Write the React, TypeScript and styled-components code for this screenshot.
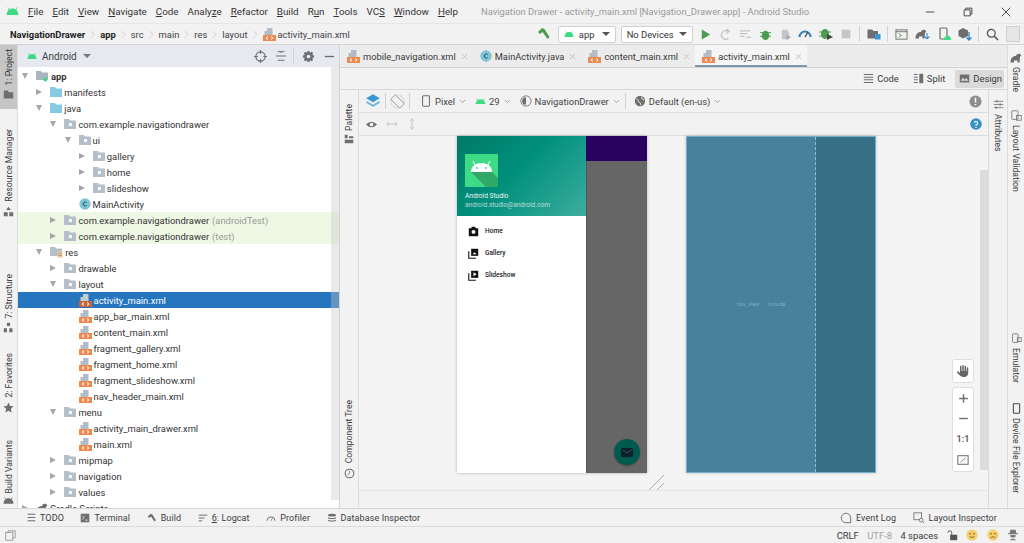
import * as React from 'react'
import styled, { createGlobalStyle } from 'styled-components'
import { LuChevronRight, LuChevronDown, LuX } from 'react-icons/lu'
import { FaHand } from 'react-icons/fa6'

const GlobalStyle = createGlobalStyle`
  html, body { margin: 0; padding: 0; width: 1024px; height: 543px; overflow: hidden; }
  body { font-family: Roboto, "Noto Sans", "Liberation Sans", sans-serif; color: #3a3a3a; background: #f2f2f2; }
  * { box-sizing: border-box; }
  svg { flex-shrink: 0; }
`

const Window = styled.div`
  width: 1024px;
  height: 543px;
  display: flex;
  flex-direction: column;
  overflow: hidden;
  font-size: 9.4px;
`

/* ---------- icons ---------- */

const Droid: React.FC<{ w?: number; color?: string }> = ({ w = 12, color = '#3ddc84' }) => (
  <svg width={w} height={w * 0.62} viewBox="0 0 20 12">
    <path d="M1 12 C1 6 5 2 10 2 C15 2 19 6 19 12 Z" fill={color} />
    <path d="M5 4 L3 0.5 M15 4 L17 0.5" stroke={color} strokeWidth="1.4" />
  </svg>
)

const XmlIcon: React.FC<{ dim?: boolean }> = ({ dim }) => (
  <svg width="13" height="13" viewBox="0 0 13 13">
    <path d="M4 0 H9.5 V7 H4 Z M1.5 3 H4 V7 H1.5 Z" fill={dim ? '#c5ccd4' : '#b3bcc4'} />
    <rect x="0" y="7" width="13" height="6" fill={dim ? '#c8683a' : '#ee8a4f'} />
    <path d="M5 8.5 L3 10 L5 11.5 M8 8.5 L10 10 L8 11.5" stroke="#fff" strokeWidth="1" fill="none" />
  </svg>
)

const ClassIcon = () => (
  <svg width="12" height="12" viewBox="0 0 12 12">
    <circle cx="6" cy="6" r="5.7" fill="#7fc5d8" />
    <path d="M7.6 4.6 A2 2 0 1 0 7.6 7.4" stroke="#2c4a58" strokeWidth="1" fill="none" />
  </svg>
)

const PackageIcon = () => (
  <svg width="12" height="10" viewBox="0 0 12 10">
    <path d="M0 0 H5 L6 1.5 H12 V10 H0 Z" fill="#b4bfc9" />
    <rect x="5" y="4" width="3" height="3" fill="#fff" />
  </svg>
)

const BlueFolder = () => (
  <svg width="12" height="10" viewBox="0 0 12 10">
    <path d="M0 0 H5 L6 1.5 H12 V10 H0 Z" fill="#85cbe6" />
  </svg>
)

const ModuleIcon = () => (
  <svg width="13" height="12" viewBox="0 0 13 12">
    <path d="M0 1 H5 L6 2.5 H12 V10 H0 Z" fill="#aab5bf" />
    <circle cx="9.3" cy="9.5" r="2" fill="#3ddc84" />
  </svg>
)

const ResIcon = () => (
  <svg width="13" height="12" viewBox="0 0 13 12">
    <path d="M0 1 H5 L6 2.5 H12 V10 H0 Z" fill="#b4bfc9" />
    <rect x="7.5" y="5.5" width="5" height="6" fill="#e9c79b" />
    <path d="M8.5 7.5 H11.5 M8.5 9.5 H11.5" stroke="#a8865a" strokeWidth="0.7" />
  </svg>
)

const GradleIcon: React.FC<{ color?: string }> = ({ color = '#6e6e6e' }) => (
  <svg width="12" height="10" viewBox="0 0 12 10">
    <path d="M0.5 9.5 C0.5 5 3 2.8 6 3 C6.5 1 8 0.3 9.5 0.8 C11.5 1.5 11.5 3.5 10 3.8 L9.5 9.5 H7.5 V7.5 H4 V9.5 Z" fill={color} />
  </svg>
)

const Glyph = styled.svg.attrs({ viewBox: '0 0 14 14' })<{ $s?: number }>`
  width: ${p => p.$s ?? 13}px;
  height: ${p => p.$s ?? 13}px;
  display: block;
`

/* ---------- title bar ---------- */

const TitleBar = styled.div`
  height: 23px;
  display: flex;
  align-items: center;
  padding-left: 6px;
  background: #f2f2f2;
`
const Menu = styled.nav`
  display: flex;
  margin-left: 9px;
  gap: 9px;
  color: #333;
  font-size: 9.8px;
`
const Mn = styled.span`
  text-decoration: underline;
  text-underline-offset: 1px;
  text-decoration-thickness: 0.5px;
`
const TitleText = styled.span`
  margin-left: 23px;
  color: #9a9a9a;
  white-space: nowrap;
`
const WinControls = styled.div`
  margin-left: auto;
  display: flex;
  gap: 26px;
  padding-right: 12px;
  color: #333;
  align-items: center;
`

/* ---------- breadcrumb bar ---------- */

const NavBar = styled.div`
  height: 22px;
  display: flex;
  align-items: center;
  padding-left: 10px;
  background: #f2f2f2;
  border-top: 1px solid #e6e6e6;
  border-bottom: 1px solid #d4d4d4;
`
const Crumb = styled.span<{ $bold?: boolean }>`
  font-weight: ${p => (p.$bold ? 700 : 400)};
  color: ${p => (p.$bold ? '#222' : '#444')};
  white-space: nowrap;
`
const FileCrumb = styled(Crumb)`
  margin-left: 2px;
`
const CrumbSep = styled(LuChevronRight)`
  width: 13px;
  height: 17px;
  color: #b8b8b8;
  stroke-width: 1;
  margin: 0 1px;
`
const RunTools = styled.div`
  margin-left: auto;
  display: flex;
  align-items: center;
  gap: 6.8px;
  padding-right: 4px;
`
const Combo = styled.div<{ $w: number }>`
  width: ${p => p.$w}px;
  height: 17px;
  display: flex;
  align-items: center;
  gap: 5px;
  padding: 0 5px;
  background: #fff;
  border: 1px solid #d0d0d0;
  border-radius: 2px;
  color: #333;
  white-space: nowrap;
  &::after {
    content: '';
    margin-left: auto;
    border-left: 4px solid transparent;
    border-right: 4px solid transparent;
    border-top: 4px solid #555;
  }
`
const NextCombo = styled(Combo)`
  margin-left: -2px;
`
const SdkGroup = styled.span`
  display: flex;
  align-items: flex-end;
  & > :last-child {
    margin-left: -3px;
  }
`
const Avatar = styled.span`
  width: 14px;
  height: 16px;
  flex-shrink: 0;
  background: #e6e6e6;
  border: 1px solid #d0d0d0;
`
const VBar = styled.span`
  width: 1px;
  height: 16px;
  background: #d2d2d2;
  flex-shrink: 0;
`

/* ---------- main area ---------- */

const Main = styled.div`
  flex: 1;
  display: flex;
  min-height: 0;
`
const Stripe = styled.aside<{ $w: number; $left?: boolean }>`
  width: ${p => p.$w}px;
  flex-shrink: 0;
  display: flex;
  flex-direction: column;
  align-items: center;
  background: #f2f2f2;
  border-${p => (p.$left ? 'right' : 'left')}: 1px solid #dcdcdc;
`
const StripeItem = styled.div<{ $active?: boolean; $top?: number; $flip?: boolean }>`
  margin-top: ${p => p.$top ?? 0}px;
  width: 100%;
  ${p => (p.$active ? 'height: 68px; padding-bottom: 9px;' : 'padding: 4px 0;')}
  display: flex;
  flex-direction: ${p => (p.$flip ? 'column' : 'column-reverse')};
  align-items: center;
  gap: 4px;
  background: ${p => (p.$active ? '#c6c6c6' : 'transparent')};
  font-size: 8.7px;
  color: #3c3c3c;
`
const GradleTab = styled(StripeItem)`
  padding-top: 8px;
`
const VLabel = styled.span<{ $flip?: boolean }>`
  writing-mode: vertical-rl;
  transform: ${p => (p.$flip ? 'none' : 'rotate(180deg)')};
  white-space: nowrap;
`

/* ---------- project panel ---------- */

const Project = styled.section`
  width: 322px;
  flex-shrink: 0;
  display: flex;
  flex-direction: column;
  background: #fff;
  border-right: 1px solid #d4d4d4;
`
const PanelHead = styled.div`
  height: 22px;
  display: flex;
  align-items: center;
  padding: 0 3px 0 9px;
  background: #e6e9ef;
  font-size: 10px;
  color: #444;
  flex-shrink: 0;
`
const PanelTitle = styled.span`
  margin-left: 5px;
`
const Caret = styled.span`
  margin-left: 6px;
  border-left: 4px solid transparent;
  border-right: 4px solid transparent;
  border-top: 4px solid #777;
`
const HeadTools = styled.div`
  margin-left: auto;
  display: flex;
  align-items: center;
  gap: 8px;
`
const HeadDivider = styled(VBar)`
  margin-left: -2px;
`
const TreeWrap = styled.div`
  flex: 1;
  min-height: 0;
  position: relative;
  overflow: hidden;
  padding-top: 1px;
`
const TreeScroll = styled.div`
  position: absolute;
  right: 0;
  top: 0;
  bottom: 8px;
  width: 8px;
  background: rgba(200, 200, 200, 0.38);
`
const Row = styled.div<{ $level: number; $sel?: boolean; $test?: boolean }>`
  height: 16px;
  display: flex;
  align-items: center;
  padding-left: ${p => p.$level * 14.2}px;
  white-space: nowrap;
  color: ${p => (p.$sel ? '#fff' : '#333')};
  background: ${p => (p.$sel ? '#2675bf' : p.$test ? '#eff7e5' : 'transparent')};
`
const Arrow = styled.span<{ $open?: boolean; $none?: boolean }>`
  width: 18px;
  padding-left: 4px;
  flex-shrink: 0;
  display: flex;
  &::before {
    content: '';
    display: ${p => (p.$none ? 'none' : 'block')};
    ${p =>
      p.$open
        ? 'border-left: 3.5px solid transparent; border-right: 3.5px solid transparent; border-top: 6px solid #a6a6a6;'
        : 'border-top: 3.5px solid transparent; border-bottom: 3.5px solid transparent; border-left: 6px solid #a6a6a6;'}
  }
`
const RowLabel = styled.span<{ $bold?: boolean }>`
  margin-left: 2px;
  font-weight: ${p => (p.$bold ? 700 : 400)};
`
const RowHint = styled.span`
  margin-left: 3px;
  color: #9a9a9a;
`

type Kind = 'module' | 'blue' | 'pkg' | 'res' | 'xml' | 'class' | 'gradle'
type Node = {
  name: string
  level: number
  kind: Kind
  open?: boolean
  leaf?: boolean
  hint?: string
  sel?: boolean
  test?: boolean
  bold?: boolean
}

const PKG = 'com.example.navigationdrawer'
const tree: Node[] = [
  { name: 'app', level: 0, kind: 'module', open: true, bold: true },
  { name: 'manifests', level: 1, kind: 'blue' },
  { name: 'java', level: 1, kind: 'blue', open: true },
  { name: PKG, level: 2, kind: 'pkg', open: true },
  { name: 'ui', level: 3, kind: 'pkg', open: true },
  { name: 'gallery', level: 4, kind: 'pkg' },
  { name: 'home', level: 4, kind: 'pkg' },
  { name: 'slideshow', level: 4, kind: 'pkg' },
  { name: 'MainActivity', level: 3, kind: 'class', leaf: true },
  { name: PKG, level: 2, kind: 'pkg', hint: '(androidTest)', test: true },
  { name: PKG, level: 2, kind: 'pkg', hint: '(test)', test: true },
  { name: 'res', level: 1, kind: 'res', open: true },
  { name: 'drawable', level: 2, kind: 'pkg' },
  { name: 'layout', level: 2, kind: 'pkg', open: true },
  { name: 'activity_main.xml', level: 3, kind: 'xml', leaf: true, sel: true },
  { name: 'app_bar_main.xml', level: 3, kind: 'xml', leaf: true },
  { name: 'content_main.xml', level: 3, kind: 'xml', leaf: true },
  { name: 'fragment_gallery.xml', level: 3, kind: 'xml', leaf: true },
  { name: 'fragment_home.xml', level: 3, kind: 'xml', leaf: true },
  { name: 'fragment_slideshow.xml', level: 3, kind: 'xml', leaf: true },
  { name: 'nav_header_main.xml', level: 3, kind: 'xml', leaf: true },
  { name: 'menu', level: 2, kind: 'pkg', open: true },
  { name: 'activity_main_drawer.xml', level: 3, kind: 'xml', leaf: true },
  { name: 'main.xml', level: 3, kind: 'xml', leaf: true },
  { name: 'mipmap', level: 2, kind: 'pkg' },
  { name: 'navigation', level: 2, kind: 'pkg' },
  { name: 'values', level: 2, kind: 'pkg' },
  { name: 'Gradle Scripts', level: 0, kind: 'gradle' },
]

const NodeIcon: React.FC<{ kind: Kind; sel?: boolean }> = ({ kind, sel }) => {
  switch (kind) {
    case 'module': return <ModuleIcon />
    case 'blue': return <BlueFolder />
    case 'res': return <ResIcon />
    case 'xml': return <XmlIcon dim={sel} />
    case 'class': return <ClassIcon />
    case 'gradle': return <GradleIcon />
    default: return <PackageIcon />
  }
}

/* ---------- editor ---------- */

const Editor = styled.section`
  flex: 1;
  min-width: 0;
  display: flex;
  flex-direction: column;
`
const Tabs = styled.div`
  height: 23px;
  display: flex;
  flex-shrink: 0;
  background: #ececec;
  border-bottom: 1px solid #d4d4d4;
`
const Tab = styled.div<{ $active?: boolean }>`
  display: flex;
  align-items: center;
  gap: 3px;
  padding: 0 4px 0 7px;
  white-space: nowrap;
  font-size: 9.3px;
  color: #3a3a3a;
  background: ${p => (p.$active ? '#f5f5f5' : 'transparent')};
  box-shadow: ${p => (p.$active ? 'inset 0 -2px 0 #7b98ad' : 'none')};
`
const TabClose = styled(LuX)`
  width: 9px;
  height: 9px;
  color: #b5b5b5;
  margin-left: 1px;
`
const ModeBar = styled.div`
  height: 22px;
  flex-shrink: 0;
  display: flex;
  align-items: center;
  justify-content: flex-end;
  gap: 8px;
  padding-right: 3px;
  background: #f2f2f2;
  border-bottom: 1px solid #d9d9d9;
`
const ModeBtn = styled.div<{ $active?: boolean }>`
  height: 18px;
  display: flex;
  align-items: center;
  gap: 3px;
  padding: 0 2px 0 4px;
  border-radius: 2px;
  color: #3a3a3a;
  background: ${p => (p.$active ? '#dadada' : 'transparent')};
`
const Workspace = styled.div`
  flex: 1;
  min-height: 0;
  display: flex;
`
const PaletteStripe = styled.aside`
  width: 19px;
  flex-shrink: 0;
  display: flex;
  flex-direction: column;
  align-items: center;
  background: #f2f2f2;
  border-right: 1px solid #dcdcdc;
  font-size: 8.6px;
  color: #3c3c3c;
`
const PaletteTop = styled.div`
  margin-top: 14px;
  display: flex;
  flex-direction: column-reverse;
  align-items: center;
  gap: 3px;
`
const TreeTab = styled.div`
  margin-top: auto;
  padding-bottom: 29px;
  display: flex;
  flex-direction: column-reverse;
  align-items: center;
  gap: 5px;
`
const DesignPane = styled.div`
  flex: 1;
  min-width: 0;
  display: flex;
  flex-direction: column;
`
const DesignBar = styled.div<{ $gap?: number }>`
  height: 23px;
  flex-shrink: 0;
  display: flex;
  align-items: center;
  padding: 0 6px 0 6px;
  gap: ${p => p.$gap ?? 4}px;
  background: #f2f2f2;
  border-bottom: 1px solid #dcdcdc;
  color: #444;
`
const Dropdown = styled.div`
  margin-left: 4px;
  display: flex;
  align-items: center;
  gap: 3px;
  white-space: nowrap;
`
const PixelDrop = styled(Dropdown)`
  margin-left: 6px;
`
const DownMark = styled(LuChevronDown)`
  width: 9px;
  height: 9px;
  color: #888;
`
const RightEnd = styled.div`
  margin-left: auto;
  display: flex;
`
const Canvas = styled.div`
  flex: 1;
  min-height: 0;
  position: relative;
  display: flex;
  flex-direction: column;
  background: #f4f4f4;
`
const Stage = styled.div`
  flex: 1;
  min-height: 0;
  display: flex;
  gap: 39px;
  padding-left: 98px;
`
const CanvasFoot = styled.div`
  height: 18px;
  flex-shrink: 0;
  background: #f2f2f2;
  border-top: 1px solid #e4e4e4;
`
const Device = styled.div`
  width: 190px;
  height: 337px;
  display: flex;
  background: #fff;
  box-shadow: 0 0 3px rgba(0, 0, 0, 0.28);
`
const Drawer = styled.div`
  width: 129px;
  display: flex;
  flex-direction: column;
  flex-shrink: 0;
`
const DrawerHead = styled.div`
  height: 80px;
  padding: 18px 8px 0;
  background: linear-gradient(135deg, #007a69 0%, #00907c 45%, #3eada0 100%);
  color: #f2f2f2;
  font-size: 6.6px;
  line-height: 9px;
`
const AppTile = styled.div`
  width: 33px;
  height: 33px;
  margin-bottom: 5px;
  background: #3ddc84;
  display: flex;
  align-items: center;
  justify-content: center;
  overflow: hidden;
`
const HeadMail = styled.div`
  opacity: 0.72;
`
const DrawerList = styled.div`
  padding-top: 4px;
  font-size: 6.6px;
  font-weight: 500;
  color: #222;
`
const DrawerItem = styled.div`
  height: 22px;
  display: flex;
  align-items: center;
  gap: 6px;
  padding-left: 11px;
`
const Scrim = styled.div`
  flex: 1;
  position: relative;
  background: #666;
  box-shadow: inset 1px 0 0 #555;
`
const StatusTint = styled.div`
  height: 25px;
  background: #2a0060;
`
const Fab = styled.div`
  position: absolute;
  right: 7px;
  bottom: 8px;
  width: 26px;
  height: 26px;
  border-radius: 50%;
  background: #015a4e;
  box-shadow: 0 1px 2px rgba(0, 0, 0, 0.3);
  display: flex;
  align-items: center;
  justify-content: center;
`
const Blueprint = styled.div`
  width: 190px;
  height: 337px;
  display: flex;
  border: 1px solid #6fb0cb;
  box-shadow: 0 0 3px rgba(0, 0, 0, 0.2);
  font-size: 5.6px;
  color: #74b1c8;
`
const BlueLeft = styled.div`
  width: 129px;
  padding: 164px 0 0 50px;
  display: flex;
  gap: 8px;
  background: #47829a;
  border-right: 1px dashed #86c3db;
`
const BlueRight = styled.div`
  flex: 1;
  background: #366f86;
`
const ResizeHandle = styled.svg`
  position: absolute;
  left: 290px;
  bottom: 18px;
  width: 16px;
  height: 15px;
`
const StageScroll = styled.div`
  position: absolute;
  right: 0;
  top: 34px;
  bottom: 38px;
  width: 8px;
  background: #dcdcdc;
`
const Floating = styled.div`
  position: absolute;
  right: 14px;
  bottom: 36px;
  display: flex;
  flex-direction: column;
  gap: 4px;
`
const FloatCard = styled.div`
  width: 22px;
  display: flex;
  flex-direction: column;
  align-items: center;
  gap: 9.3px;
  padding: 5px 0;
  background: #fff;
  border: 1px solid #dedede;
  border-radius: 3px;
  font-size: 9px;
  line-height: 11px;
  font-weight: 700;
  color: #666;
`
const HandIcon = styled(FaHand)`
  width: 12px;
  height: 12px;
  color: #666;
`
const AttrStripe = styled(PaletteStripe)`
  border-right: none;
  border-left: 1px solid #dcdcdc;
  justify-content: flex-start;
`
const AttrTop = styled.div`
  margin-top: 9px;
  display: flex;
  flex-direction: column;
  align-items: center;
  gap: 4px;
`

/* ---------- bottom bars ---------- */

const ToolBar = styled.div`
  height: 19px;
  flex-shrink: 0;
  display: flex;
  align-items: center;
  padding-left: 27px;
  gap: 16.5px;
  background: #f2f2f2;
  border-top: 1px solid #d6d6d6;
  border-bottom: 1px solid #dcdcdc;
  font-size: 9px;
  letter-spacing: 0.1px;
  color: #3c3c3c;
`
const ToolItem = styled.div`
  display: flex;
  align-items: center;
  gap: 4px;
  white-space: nowrap;
`
const LastToolItem = styled(ToolItem)`
  padding-right: 27px;
`
const ToolSpacer = styled.div`
  flex: 1;
`
const StatusBar = styled.div`
  height: 16px;
  flex-shrink: 0;
  display: flex;
  align-items: center;
  padding: 0 5px;
  gap: 8.5px;
  background: #f2f2f2;
  color: #3a3a3a;
`
const Muted = styled.span`
  color: #a2a2a2;
`

/* ---------- small drawn glyphs ---------- */

const gray = '#6e6e6e'
const Smiley: React.FC<{ sad?: boolean }> = ({ sad }) => (
  <svg width="12" height="12" viewBox="0 0 12 12">
    <circle cx="6" cy="6" r="5.6" fill="#f6cf6b" />
    <circle cx="4" cy="4.8" r="0.8" fill="#6a5423" />
    <circle cx="8" cy="4.8" r="0.8" fill="#6a5423" />
    <path d={sad ? 'M3.6 8.6 Q6 6.8 8.4 8.6' : 'M3.6 7.6 Q6 9.4 8.4 7.6'} stroke="#6a5423" fill="none" strokeWidth="0.8" />
  </svg>
)

const Layers = () => (
  <Glyph $s={16}>
    <path d="M7 1 L13 4.6 L7 8.2 L1 4.6 Z" fill="#3b97d3" />
    <path d="M1.5 7 L7 10.2 L12.5 7 L13 8.6 L7 12.2 L1 8.6 Z" fill="#6cb4e2" />
  </Glyph>
)

const MailGlyph: React.FC<{ color?: string }> = ({ color = '#10202a' }) => (
  <svg width="12" height="9" viewBox="0 0 12 9">
    <rect width="12" height="9" rx="1.5" fill={color} />
    <path d="M1.5 2 L6 5 L10.5 2" stroke="#3d6a66" fill="none" strokeWidth="0.8" />
  </svg>
)

const App: React.FC = () => (
  <Window>
    <GlobalStyle />
    <TitleBar>
      <Droid w={13} />
      <Menu>
        <span><Mn>F</Mn>ile</span>
        <span><Mn>E</Mn>dit</span>
        <span><Mn>V</Mn>iew</span>
        <span><Mn>N</Mn>avigate</span>
        <span><Mn>C</Mn>ode</span>
        <span>Analy<Mn>z</Mn>e</span>
        <span><Mn>R</Mn>efactor</span>
        <span><Mn>B</Mn>uild</span>
        <span>R<Mn>u</Mn>n</span>
        <span><Mn>T</Mn>ools</span>
        <span>VC<Mn>S</Mn></span>
        <span><Mn>W</Mn>indow</span>
        <span><Mn>H</Mn>elp</span>
      </Menu>
      <TitleText>Navigation Drawer - activity_main.xml [Navigation_Drawer.app] - Android Studio</TitleText>
      <WinControls>
        <Glyph $s={12}><path d="M2 7 H12" stroke="#333" strokeWidth="1" /></Glyph>
        <Glyph $s={12}><path d="M2.5 4.5 H9.5 V11.5 H2.5 Z M4.5 4.5 V2.5 H11.5 V9.5 H9.5" stroke="#333" fill="none" /></Glyph>
        <Glyph $s={12}><path d="M2 2 L12 12 M12 2 L2 12" stroke="#333" strokeWidth="1" /></Glyph>
      </WinControls>
    </TitleBar>

    <NavBar>
      <Crumb $bold>NavigationDrawer</Crumb><CrumbSep />
      <Crumb $bold>app</Crumb><CrumbSep />
      <Crumb>src</Crumb><CrumbSep />
      <Crumb>main</Crumb><CrumbSep />
      <Crumb>res</Crumb><CrumbSep />
      <Crumb>layout</Crumb><CrumbSep />
      <XmlIcon />
      <FileCrumb>activity_main.xml</FileCrumb>
      <RunTools>
        <Glyph $s={14}><path d="M1 5 L5 1 L7.5 2 L12.5 10 L10.5 12 L5.5 5 L3 7 Z" fill="#4d9a52" /></Glyph>
        <Combo $w={58}><Droid w={10} />app</Combo>
        <NextCombo $w={72}>No Devices</NextCombo>
        <Glyph $s={13}><path d="M3 1.5 L12 7 L3 12.5 Z" fill="#4a9c50" /></Glyph>
        <Glyph $s={13}><path d="M10 4 A4.5 4.5 0 1 0 10 11 M8 1 L11 3.5 L8 6" stroke="#bfc4c8" fill="none" strokeWidth="1.4" /></Glyph>
        <Glyph $s={13}><path d="M1 3 H12 M1 6 H9 M1 9 H6 M8 10 H13" stroke="#c2c6ca" strokeWidth="1.4" /></Glyph>
        <Glyph $s={13}><ellipse cx="7" cy="8" rx="4" ry="5" fill="#4a9c50" /><path d="M1 5 H13 M1 9 H13" stroke="#4a9c50" /></Glyph>
        <Glyph $s={13}><path d="M3 2 H9 L11 5 V12 H3 Z" fill="#c2c6ca" /><path d="M8 7 L13 10 L8 13 Z" fill="#a8adb2" /></Glyph>
        <Glyph $s={14}><path d="M1.5 10 A5.5 5.5 0 0 1 12.5 10" stroke="#2f7fb8" fill="none" strokeWidth="2" /><path d="M7 10 L10 5" stroke="#444" strokeWidth="1.3" /></Glyph>
        <Glyph $s={14}><ellipse cx="6" cy="7" rx="4" ry="5" fill="#4a9c50" /><path d="M0 5 H12 M0 9 H12" stroke="#4a9c50" /><path d="M8 7 L14 10 L8 13 Z" fill="#444" /></Glyph>
        <Glyph $s={12}><rect x="2" y="2" width="10" height="10" fill="#c5c5c5" /></Glyph>
        <VBar />
        <Glyph $s={14}><path d="M0.5 2.5 H5 L6.5 4 H11 V11.5 H0.5 Z" fill="#6e6e6e" /><rect x="8" y="7" width="5.5" height="5.5" fill="#3b97d3" /></Glyph>
        <VBar />
        <Glyph $s={13}><rect x="1" y="2" width="12" height="10" fill="none" stroke="#6e6e6e" /><path d="M1 4 H13" stroke="#6e6e6e" /><path d="M4 6 L7 8 L4 10" fill="none" stroke="#4a9c50" /></Glyph>
        <SdkGroup><GradleIcon /><Glyph $s={6}><path d="M7 0 V14 M1 8 L7 14 L13 8" stroke="#2f86c8" strokeWidth="2.4" fill="none" /></Glyph></SdkGroup>
        <Glyph $s={14}><rect x="3" y="1" width="7" height="11" rx="1" fill="none" stroke="#6e6e6e" strokeWidth="1.2" /><path d="M7 13 C7 10 9 8.5 10.5 8.5 C12 8.5 14 10 14 13 Z" fill="#3ddc84" /></Glyph>
        <Glyph $s={14}><path d="M5 1 L10 3.5 V9 L5 11.5 L0.5 9 V3.5 Z" fill="#6e6e6e" /><path d="M11 5 V13 M8.5 10.5 L11 13 L13.5 10.5" stroke="#2f86c8" fill="none" strokeWidth="1.3" /></Glyph>
        <VBar />
        <Glyph $s={13}><circle cx="5.7" cy="5.7" r="4.2" fill="none" stroke="#555" strokeWidth="1.4" /><path d="M9 9 L13 13" stroke="#555" strokeWidth="1.6" /></Glyph>
        <Avatar />
      </RunTools>
    </NavBar>

    <Main>
      <Stripe $w={18} $left>
        <StripeItem $active>
          <Glyph $s={11}><path d="M1 2 H6 L7.5 4 H13 V12 H1 Z" fill={gray} /></Glyph>
          <VLabel>1: Project</VLabel>
        </StripeItem>
        <StripeItem $top={16}>
          <Glyph $s={11}><path d="M7 1 L10 5 H4 Z M1 8 H6 V13 H1 Z M8 8 H13 V13 H8 Z" fill={gray} /></Glyph>
          <VLabel>Resource Manager</VLabel>
        </StripeItem>
        <StripeItem $top={49}>
          <Glyph $s={11}><path d="M5 1 H9 V5 H5 Z M1 8 H5 V13 H1 Z M8 8 H12 V13 H8 Z" fill={gray} /></Glyph>
          <VLabel>7: Structure</VLabel>
        </StripeItem>
        <StripeItem $top={12}>
          <Glyph $s={11}><path d="M7 0.5 L9 5 L13.5 5.5 L10 8.7 L11 13.5 L7 11 L3 13.5 L4 8.7 L0.5 5.5 L5 5 Z" fill={gray} /></Glyph>
          <VLabel>2: Favorites</VLabel>
        </StripeItem>
        <StripeItem $top={19}>
          <Droid w={11} color={gray} />
          <VLabel>Build Variants</VLabel>
        </StripeItem>
      </Stripe>

      <Project>
        <PanelHead>
          <Droid w={10} />
          <PanelTitle>Android</PanelTitle>
          <Caret />
          <HeadTools>
            <Glyph $s={13}><circle cx="7" cy="7" r="5" fill="none" stroke={gray} strokeWidth="1.3" /><path d="M7 0 V4 M7 10 V14 M0 7 H4 M10 7 H14" stroke={gray} strokeWidth="1.3" /></Glyph>
            <Glyph $s={12}><path d="M1 7 H13 M3 2 H11 M3 12 H11 M7 3 L5 1 M7 3 L9 1" stroke={gray} strokeWidth="1.1" fill="none" /></Glyph>
            <HeadDivider />
            <Glyph $s={13}><path d="M6 1 H8 L8.5 3 L10.5 2 L12 3.5 L11 5.5 L13 6 V8 L11 8.5 L12 10.5 L10.5 12 L8.5 11 L8 13 H6 L5.5 11 L3.5 12 L2 10.5 L3 8.5 L1 8 V6 L3 5.5 L2 3.5 L3.5 2 L5.5 3 Z" fill={gray} /><circle cx="7" cy="7" r="2" fill="#e6e9ef" /></Glyph>
            <Glyph $s={13}><path d="M2 7 H12" stroke={gray} strokeWidth="1.4" /></Glyph>
          </HeadTools>
        </PanelHead>
        <TreeWrap>
          {tree.map((n, i) => (
            <Row key={i} $level={n.level} $sel={n.sel} $test={n.test}>
              <Arrow $open={n.open} $none={n.leaf} />
              <NodeIcon kind={n.kind} sel={n.sel} />
              <RowLabel $bold={n.bold}>{n.name}</RowLabel>
              {n.hint && <RowHint>{n.hint}</RowHint>}
            </Row>
          ))}
          <TreeScroll />
        </TreeWrap>
      </Project>

      <Editor>
        <Tabs>
          <Tab><XmlIcon />mobile_navigation.xml<TabClose /></Tab>
          <Tab><ClassIcon />MainActivity.java<TabClose /></Tab>
          <Tab><XmlIcon />content_main.xml<TabClose /></Tab>
          <Tab $active><XmlIcon />activity_main.xml<TabClose /></Tab>
        </Tabs>
        <ModeBar>
          <ModeBtn><Glyph $s={11}><path d="M1 2 H13 M1 5.3 H13 M1 8.6 H13 M1 12 H13" stroke={gray} strokeWidth="1.3" /></Glyph>Code</ModeBtn>
          <ModeBtn><Glyph $s={11}><path d="M1 2 H6 M1 5.3 H6 M1 8.6 H6 M1 12 H6" stroke={gray} strokeWidth="1.3" /><rect x="8" y="1" width="5" height="12" fill={gray} /></Glyph>Split</ModeBtn>
          <ModeBtn $active><Glyph $s={11}><rect x="1" y="2" width="12" height="10" fill={gray} /><path d="M2 10 L5 6 L7.5 8.5 L9.5 6.5 L12 10 Z" fill="#dadada" /></Glyph>Design</ModeBtn>
        </ModeBar>
        <Workspace>
          <PaletteStripe>
            <PaletteTop>
              <Glyph $s={10}><path d="M1 1 H5 V6 H1 Z M1 8 H13 V13 H1 Z M7 3 H13 V6 H7 Z" fill={gray} /></Glyph>
              <VLabel>Palette</VLabel>
            </PaletteTop>
            <TreeTab>
              <Glyph $s={11}><circle cx="7" cy="7" r="5.5" fill="none" stroke={gray} strokeWidth="1.4" /><path d="M7 3.5 V7 L4.5 9" stroke={gray} fill="none" /></Glyph>
              <VLabel>Component Tree</VLabel>
            </TreeTab>
          </PaletteStripe>
          <DesignPane>
            <DesignBar>
              <Layers />
              <VBar />
              <Glyph $s={15}><rect x="4" y="1" width="6" height="12" rx="1" transform="rotate(-45 7 7)" fill="none" stroke="#888" strokeWidth="0.8" /><circle cx="7" cy="7" r="6" fill="none" stroke="#bbb" strokeWidth="0.8" strokeDasharray="2 1" /></Glyph>
              <VBar />
              <PixelDrop>
                <Glyph $s={12}><rect x="3" y="1" width="8" height="12" rx="1" fill="none" stroke={gray} strokeWidth="1.2" /></Glyph>
                Pixel<DownMark />
              </PixelDrop>
              <Dropdown>
                <Droid w={11} />29<DownMark />
              </Dropdown>
              <Dropdown>
                <Glyph $s={12}><circle cx="7" cy="7" r="6" fill="none" stroke={gray} /><path d="M7 2.5 A4.5 4.5 0 0 0 7 11.5 Z" fill={gray} /></Glyph>
                NavigationDrawer<DownMark />
              </Dropdown>
              <VBar />
              <Dropdown>
                <Glyph $s={12}><circle cx="7" cy="7" r="6" fill={gray} /><path d="M3 4 Q6 6 5 8 Q8 8 8 12 M9 2 Q8 5 12 6" stroke="#f2f2f2" fill="none" /></Glyph>
                Default (en-us)<DownMark />
              </Dropdown>
              <RightEnd>
                <Glyph $s={13}><circle cx="7" cy="7" r="6.5" fill="#8d8d8d" /><path d="M7 3 V8 M7 9.6 V11" stroke="#fff" strokeWidth="1.6" /></Glyph>
              </RightEnd>
            </DesignBar>
            <DesignBar $gap={8}>
              <Glyph $s={13}><path d="M1 7 Q7 1 13 7 Q7 13 1 7 Z" fill={gray} /><circle cx="7" cy="7" r="2" fill="#f2f2f2" /></Glyph>
              <Glyph $s={12}><path d="M1 7 H13 M3.5 4.5 L1 7 L3.5 9.5 M10.5 4.5 L13 7 L10.5 9.5" stroke="#bdbdbd" fill="none" /></Glyph>
              <Glyph $s={12}><path d="M7 1 V13 M4.5 3.5 L7 1 L9.5 3.5 M4.5 10.5 L7 13 L9.5 10.5" stroke="#bdbdbd" fill="none" /></Glyph>
              <RightEnd>
                <Glyph $s={12}><circle cx="7" cy="7" r="6.8" fill="#3592c4" /><path d="M5 5.5 A2 2 0 1 1 7 8 V9 M7 10.2 V11.6" stroke="#fff" strokeWidth="1.3" fill="none" /></Glyph>
              </RightEnd>
            </DesignBar>
            <Canvas>
              <Stage>
                <Device>
                  <Drawer>
                    <DrawerHead>
                      <AppTile>
                        <svg width="33" height="33" viewBox="0 0 33 33">
                          <path d="M6 18 H27 L33 24 V33 H21 Z" fill="#2fa868" />
                          <path d="M6 18 C6 12 11 9 16.5 9 C22 9 27 12 27 18 Z" fill="#fff" />
                          <path d="M10 11 L8 7 M23 11 L25 7" stroke="#fff" />
                          <circle cx="12" cy="14" r="1" fill="#3ddc84" />
                          <circle cx="21" cy="14" r="1" fill="#3ddc84" />
                        </svg>
                      </AppTile>
                      <div>Android Studio</div>
                      <HeadMail>android.studio@android.com</HeadMail>
                    </DrawerHead>
                    <DrawerList>
                      <DrawerItem>
                        <Glyph $s={11}><path d="M1 3 H4 L5 1 H9 L10 3 H13 V13 H1 Z" fill="#111" /><circle cx="7" cy="7.5" r="2.5" fill="#fff" /></Glyph>
                        Home
                      </DrawerItem>
                      <DrawerItem>
                        <Glyph $s={11}><rect x="4" y="1" width="9" height="9" fill="#111" /><path d="M1 4 V13 H10" stroke="#111" strokeWidth="1.4" fill="none" /><path d="M6 8 L8 5.5 L11 8 Z" fill="#fff" /></Glyph>
                        Gallery
                      </DrawerItem>
                      <DrawerItem>
                        <Glyph $s={11}><rect x="4" y="1" width="9" height="9" fill="#111" /><path d="M1 4 V13 H10" stroke="#111" strokeWidth="1.4" fill="none" /><path d="M7 3 L11 5.5 L7 8 Z" fill="#fff" /></Glyph>
                        Slideshow
                      </DrawerItem>
                    </DrawerList>
                  </Drawer>
                  <Scrim>
                    <StatusTint />
                    <Fab><MailGlyph /></Fab>
                  </Scrim>
                </Device>
                <Blueprint>
                  <BlueLeft>
                    <span>nav_view</span>
                    <span>include</span>
                  </BlueLeft>
                  <BlueRight />
                </Blueprint>
              </Stage>
              <CanvasFoot />
              <ResizeHandle viewBox="0 0 16 15">
                <path d="M0 15 L15 0 M8 15 L15 8" stroke="#a8a8a8" fill="none" />
              </ResizeHandle>
              <StageScroll />
              <Floating>
                <FloatCard>
                  <HandIcon />
                </FloatCard>
                <FloatCard>
                  <Glyph $s={11}><path d="M7 1.5 V12.5 M1.5 7 H12.5" stroke={gray} strokeWidth="1.8" /></Glyph>
                  <Glyph $s={11}><path d="M1.5 7 H12.5" stroke={gray} strokeWidth="1.8" /></Glyph>
                  <span>1:1</span>
                  <Glyph $s={12}><rect x="1" y="2" width="12" height="10" fill="none" stroke={gray} strokeWidth="1.2" /><path d="M4 9.5 L10 4.5" stroke={gray} /></Glyph>
                </FloatCard>
              </Floating>
            </Canvas>
          </DesignPane>
          <AttrStripe>
            <AttrTop>
              <Glyph $s={11}><path d="M1 3 H13 M1 7 H13 M1 11 H13 M5 1 V5 M9 5 V9 M4 9 V13" stroke={gray} /></Glyph>
              <VLabel $flip>Attributes</VLabel>
            </AttrTop>
          </AttrStripe>
        </Workspace>
      </Editor>

      <Stripe $w={17}>
        <GradleTab $flip>
          <GradleIcon />
          <VLabel $flip>Gradle</VLabel>
        </GradleTab>
        <StripeItem $flip $top={10}>
          <Glyph $s={11}><rect x="1" y="1" width="8" height="11" rx="1" fill="none" stroke={gray} /><rect x="7" y="7" width="6" height="6" fill="none" stroke={gray} /></Glyph>
          <VLabel $flip>Layout Validation</VLabel>
        </StripeItem>
        <StripeItem $flip $top={133}>
          <Glyph $s={11}><rect x="2" y="1" width="7" height="11" rx="1" fill="none" stroke={gray} /><rect x="8" y="6" width="5" height="5" fill="none" stroke={gray} /></Glyph>
          <VLabel $flip>Emulator</VLabel>
        </StripeItem>
        <StripeItem $flip $top={12}>
          <Glyph $s={11}><rect x="3" y="1" width="8" height="12" rx="1" fill="none" stroke="#444" strokeWidth="1.3" /></Glyph>
          <VLabel $flip>Device File Explorer</VLabel>
        </StripeItem>
      </Stripe>
    </Main>

    <ToolBar>
      <ToolItem><Glyph $s={9}><path d="M1 2 H13 M1 7 H13 M1 12 H13" stroke={gray} strokeWidth="1.6" /></Glyph>TODO</ToolItem>
      <ToolItem><Glyph $s={10}><rect x="1" y="1" width="12" height="12" fill={gray} /><path d="M3 4 L6 6.5 L3 9 M7 10 H11" stroke="#f2f2f2" fill="none" /></Glyph>Terminal</ToolItem>
      <ToolItem><Glyph $s={10}><path d="M1 5 L5 1 L7.5 2 L12.5 10 L10.5 12 L5.5 5 L3 7 Z" fill={gray} /></Glyph>Build</ToolItem>
      <ToolItem><Glyph $s={10}><path d="M1 3 H13 M1 7 H9 M1 11 H6" stroke={gray} strokeWidth="1.4" /></Glyph><span><Mn>6</Mn>: Logcat</span></ToolItem>
      <ToolItem><Glyph $s={10}><path d="M1.5 11 A5.5 5.5 0 0 1 12.5 11" stroke={gray} fill="none" strokeWidth="1.5" /><path d="M7 11 L9.5 6" stroke={gray} /></Glyph>Profiler</ToolItem>
      <ToolItem><Glyph $s={10}><ellipse cx="7" cy="3" rx="5.5" ry="2" fill={gray} /><path d="M1.5 6.5 Q7 9 12.5 6.5 M1.5 10 Q7 12.5 12.5 10" stroke={gray} strokeWidth="1.5" fill="none" /></Glyph>Database Inspector</ToolItem>
      <ToolSpacer />
      <ToolItem><Glyph $s={12}><path d="M7 1.5 A5.5 5.5 0 1 0 7 12.5 H12.5 V7 A5.5 5.5 0 0 0 7 1.5 Z" fill="none" stroke={gray} strokeWidth="1.1" /></Glyph>Event Log</ToolItem>
      <LastToolItem><Glyph $s={12}><rect x="1" y="1" width="9" height="8" fill="none" stroke={gray} /><circle cx="9.5" cy="9.5" r="2.2" fill="#f2f2f2" stroke={gray} /><path d="M11 11 L13 13" stroke={gray} /></Glyph>Layout Inspector</LastToolItem>
    </ToolBar>
    <StatusBar>
      <Glyph $s={11}><rect x="1" y="3" width="9" height="10" fill="none" stroke="#8a8a8a" /><path d="M4 3 V1 H13 V10 H10" stroke="#8a8a8a" fill="none" /></Glyph>
      <ToolSpacer />
      <span>CRLF</span>
      <Muted>UTF-8</Muted>
      <span>4 spaces</span>
      <Glyph $s={11}><path d="M6 6 V3.5 A2.5 2.5 0 0 0 1 3.5" stroke="#555" fill="none" strokeWidth="1.2" /><rect x="4" y="6" width="9" height="7" fill="#555" /></Glyph>
      <Smiley />
      <Smiley sad />
      <Glyph $s={12}><path d="M4 1 H10 L11 5 H13 V6 H1 V5 H3 Z M4 7 H10 V9 Q7 11 4 9 Z M3 13 Q7 10 11 13 Z" fill="#777" /></Glyph>
    </StatusBar>
  </Window>
)

export default App
